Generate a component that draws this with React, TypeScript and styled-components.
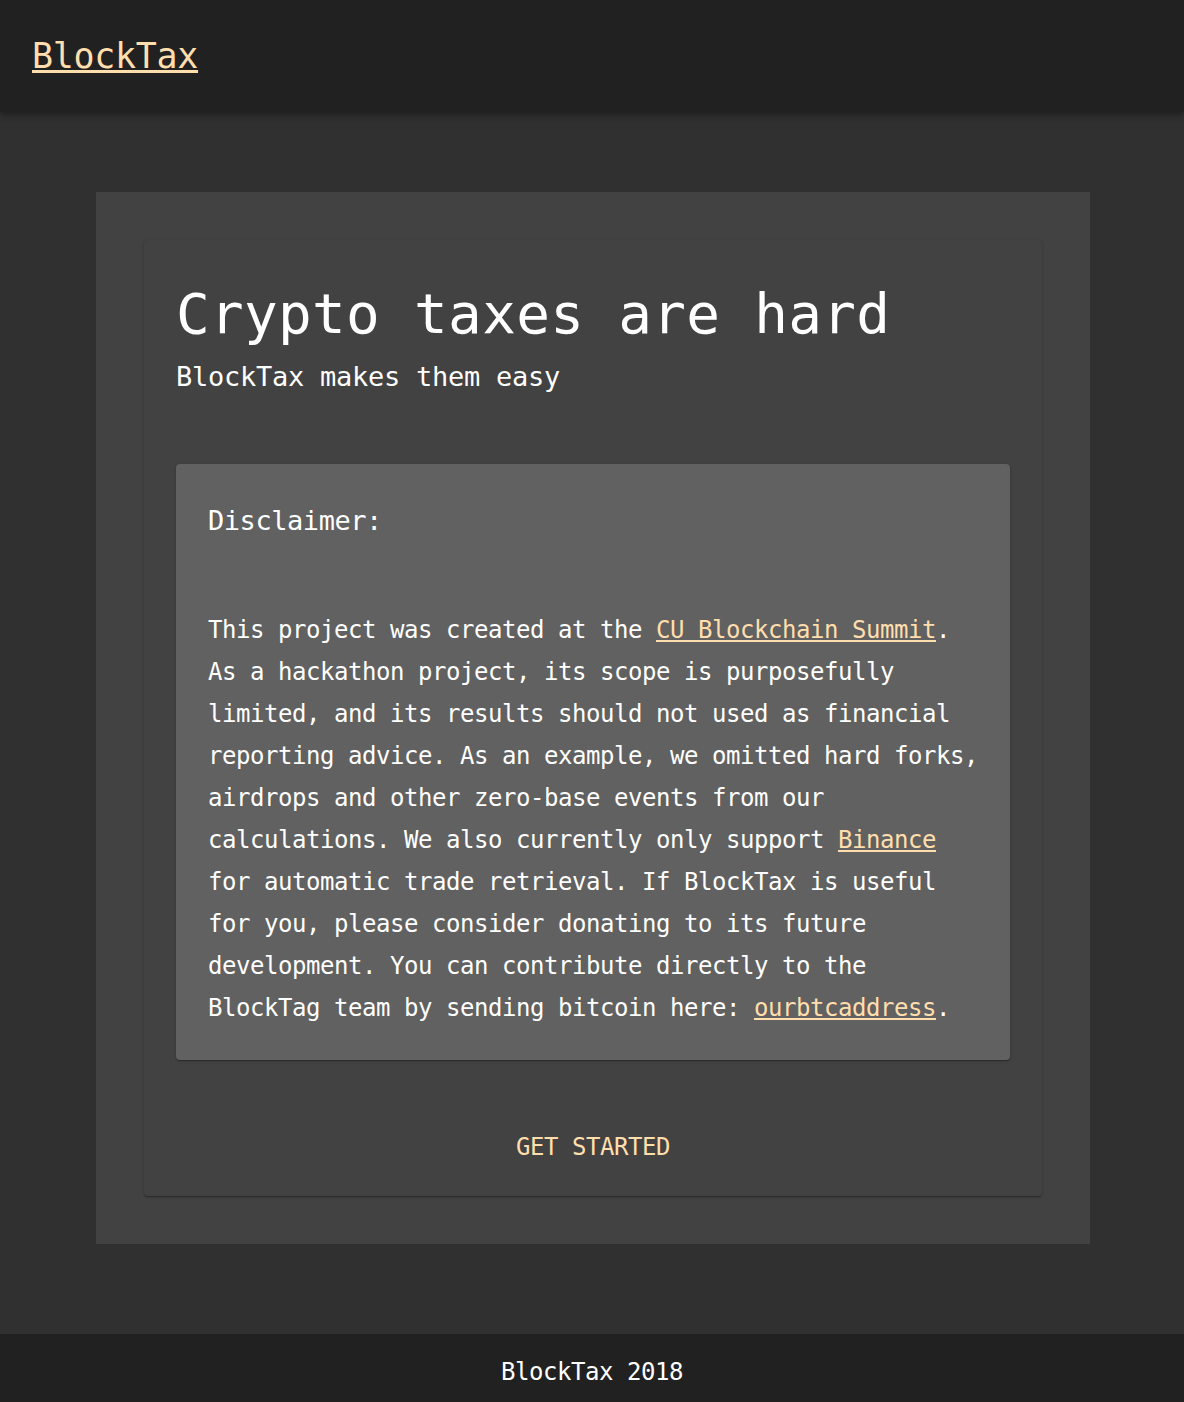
import React from 'react';
import styled, { createGlobalStyle } from 'styled-components';

const GlobalStyle = createGlobalStyle`
  body {
    margin: 0;
    background: #303030;
    color: #ffffff;
    font-family: 'DejaVu Sans Mono', 'Liberation Mono', monospace;
  }
`;

const Header = styled.header`
  display: flex;
  align-items: center;
  height: 112px;
  padding: 0 32px;
  background: #212121;
  position: relative;
  z-index: 1;
  box-shadow: 0 2px 4px -1px rgba(0, 0, 0, 0.2), 0 4px 5px 0 rgba(0, 0, 0, 0.14),
    0 1px 10px 0 rgba(0, 0, 0, 0.12);
`;

const Logo = styled.a`
  color: #ffdead;
  font-size: 35px;
  line-height: 42px;
  letter-spacing: -0.32px;
  text-decoration: underline;
`;

const Main = styled.main`
  padding: 80px 94px 90px 96px;
`;

const Panel = styled.section`
  background: #424242;
  padding: 48px;
`;

const Card = styled.div`
  background: #424242;
  border-radius: 4px;
  padding: 32px 32px 28px;
  box-shadow: 0 1px 3px 0 rgba(0, 0, 0, 0.2), 0 1px 1px 0 rgba(0, 0, 0, 0.14),
    0 2px 1px -1px rgba(0, 0, 0, 0.12);
`;

const Title = styled.h1`
  margin: 0;
  font-size: 56px;
  font-weight: 400;
  line-height: 84px;
  letter-spacing: 0.3px;
`;

const Subtitle = styled.p`
  margin: 0;
  font-size: 27px;
  line-height: 41px;
  letter-spacing: -0.25px;
`;

const Disclaimer = styled.div`
  margin-top: 67px;
  background: #616161;
  border-radius: 4px;
  padding: 36px 24px 31px 32px;
  box-shadow: 0 1px 3px 0 rgba(0, 0, 0, 0.2), 0 1px 1px 0 rgba(0, 0, 0, 0.14),
    0 2px 1px -1px rgba(0, 0, 0, 0.12);
`;

const DisclaimerTitle = styled.h2`
  margin: 0 0 67px;
  font-size: 27px;
  font-weight: 400;
  line-height: 42px;
  letter-spacing: -0.45px;
`;

const BodyText = styled.p`
  margin: 0;
  font-size: 24px;
  line-height: 42px;
  letter-spacing: -0.45px;
`;

const TextLink = styled.a`
  color: #ffdead;
  text-decoration: underline;
`;

const Actions = styled.div`
  display: flex;
  justify-content: center;
  margin-top: 66px;
`;

const Button = styled.button`
  background: none;
  border: none;
  padding: 0 8px;
  color: #ffdead;
  font-family: inherit;
  font-size: 24px;
  line-height: 42px;
  letter-spacing: -0.45px;
  text-transform: uppercase;
  cursor: pointer;
`;

const Footer = styled.footer`
  background: #212121;
  padding: 17px 0 9px;
  text-align: center;
  font-size: 24px;
  line-height: 42px;
  letter-spacing: -0.45px;
`;

const App: React.FC = () => {
  return (
    <>
      <GlobalStyle />
      <Header>
        <Logo href="#">BlockTax</Logo>
      </Header>
      <Main>
        <Panel>
          <Card>
            <Title>Crypto taxes are hard</Title>
            <Subtitle>BlockTax makes them easy</Subtitle>
            <Disclaimer>
              <DisclaimerTitle>Disclaimer:</DisclaimerTitle>
              <BodyText>
                This project was created at the <TextLink href="#">CU Blockchain Summit</TextLink>.
                As a hackathon project, its scope is purposefully limited, and its results should
                not used as financial reporting advice. As an example, we omitted hard forks,
                airdrops and other zero-base events from our calculations. We also currently only
                support <TextLink href="#">Binance</TextLink> for automatic trade retrieval. If
                BlockTax is useful for you, please consider donating to its future development.
                You can contribute directly to the BlockTag team by sending bitcoin here:{' '}
                <TextLink href="#">ourbtcaddress</TextLink>.
              </BodyText>
            </Disclaimer>
            <Actions>
              <Button>Get Started</Button>
            </Actions>
          </Card>
        </Panel>
      </Main>
      <Footer>BlockTax 2018</Footer>
    </>
  );
};

export default App;
